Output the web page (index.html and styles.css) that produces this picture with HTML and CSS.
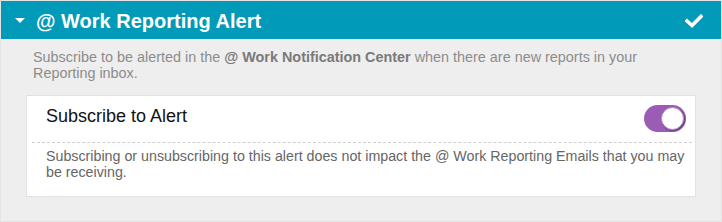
FILE: index.html
```html
<!DOCTYPE html>
<html>
<head>
<meta charset="utf-8">
<link rel="stylesheet" href="styles.css">
</head>
<body>
<div class="panel">
  <div class="panel-header">
    <span class="caret"></span>
    <h1 class="title">@ Work Reporting Alert</h1>
    <svg class="check" width="18" height="14" viewBox="0 0 18 14"><polyline points="2,7 7,11.5 16,2.5" fill="none" stroke="#fff" stroke-width="3.6" stroke-linecap="square" stroke-linejoin="miter"/></svg>
  </div>
  <div class="panel-body">
    <p class="desc">Subscribe to be alerted in the <b>@ Work Notification Center</b> when there are new reports in your<br>Reporting inbox.</p>
    <div class="card">
      <div class="card-row">
        <span class="label">Subscribe to Alert</span>
        <span class="toggle"><span class="knob"></span></span>
      </div>
      <div class="sep"></div>
      <p class="note">Subscribing or unsubscribing to this alert does not impact the @ Work Reporting Emails that you may be receiving.</p>
    </div>
  </div>
</div>
</body>
</html>
```

FILE: styles.css
```css
html, body {
  margin: 0;
  padding: 0;
  background: #ffffff;
}
body {
  font-family: "Liberation Sans", Arial, sans-serif;
}
.panel {
  width: 720px;
  height: 220px;
  border: 1px solid #e4e4e4;
  background: #eeeeee;
  display: flex;
  flex-direction: column;
}
.panel-header {
  height: 38px;
  background: #019ab9;
  display: flex;
  align-items: center;
  padding: 0 18px 0 14px;
  flex-shrink: 0;
}
.caret {
  width: 0;
  height: 0;
  border-left: 5px solid transparent;
  border-right: 5px solid transparent;
  border-top: 5px solid #ffffff;
  margin-top: 1px;
}
.title {
  margin: 1px 0 0 11px;
  font-size: 20px;
  font-weight: bold;
  color: #ffffff;
  line-height: 24px;
  flex: 1;
}
.check {
  display: block;
  margin-top: 1px;
}
.panel-body {
  padding: 10px 25px 0 25px;
}
.desc {
  margin: 0 20px 14px 7px;
  font-size: 14.4px;
  line-height: 16px;
  color: #8c8c8c;
}
.desc b {
  color: #7a7a7a;
}
.card {
  background: #ffffff;
  border: 1px solid #e2e2e2;
  padding-bottom: 16px;
}
.card-row {
  display: flex;
  align-items: center;
  justify-content: space-between;
  padding: 9px 9px 10px 19px;
}
.label {
  font-size: 18px;
  color: #111111;
  margin-top: -4px;
}
.toggle {
  width: 42px;
  height: 27px;
  border-radius: 14px;
  background: #9b5cb6;
  display: flex;
  align-items: center;
  justify-content: flex-end;
  padding-right: 2px;
  box-sizing: border-box;
}
.knob {
  width: 23px;
  height: 23px;
  border-radius: 50%;
  background: #ffffff;
  box-shadow: 1px 1px 2px rgba(0,0,0,0.35);
  border: 1px solid #b48ac8;
  box-sizing: border-box;
}
.sep {
  border-top: 1px dashed #d0d0d0;
  margin: 0 3px 0 5px;
}
.note {
  margin: 5px 4px 0 19px;
  font-size: 14.25px;
  line-height: 16px;
  color: #666666;
}
```
